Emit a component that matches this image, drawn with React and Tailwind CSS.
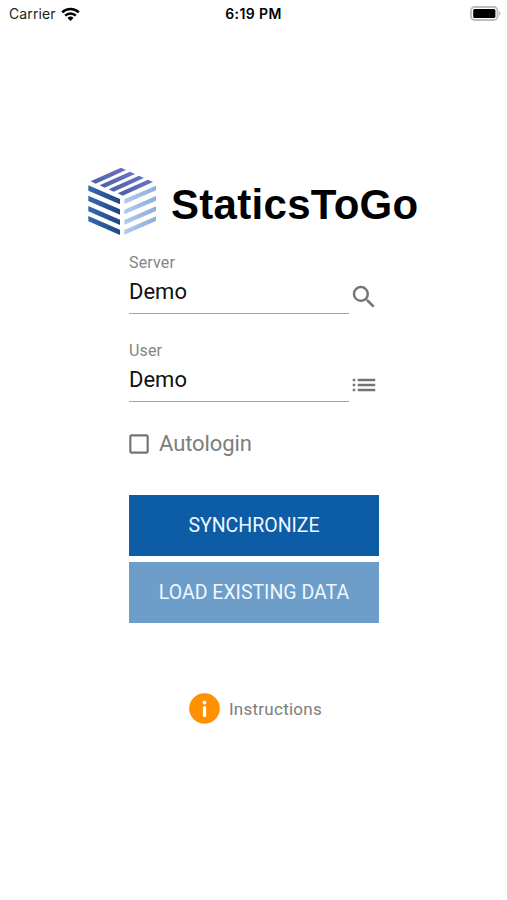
import { MdSearch, MdList, MdCheckBoxOutlineBlank } from 'react-icons/md';

const StatusBar = () => (
  <header className="grid h-7 grid-cols-3 items-center px-[9px] font-['Inter','Liberation_Sans',sans-serif] text-black">
    <div className="flex items-center gap-[5px]">
      <span className="text-[14px] leading-4 tracking-[0.1px] text-[#222]">Carrier</span>
      <svg className="-mt-px h-[14px] w-[19px]" viewBox="0 0 19 14" fill="none" stroke="#000" strokeWidth="2.5">
        <path d="M1.2 5.3a11.8 11.8 0 0 1 16.6 0" />
        <path d="M4.2 8.6a7.5 7.5 0 0 1 10.6 0" />
        <path d="M6.5 11a4.3 4.3 0 0 1 6 0L9.5 14z" fill="#000" stroke="none" />
      </svg>
    </div>
    <span className="whitespace-nowrap text-center text-[14px] font-semibold leading-4 tracking-[0.4px]">6:19 PM</span>
    <svg className="-mr-[3px] -mt-[2px] h-[15px] w-[31px] justify-self-end" viewBox="0 0 31 15">
      <rect x="1" y="1" width="26.5" height="13" rx="3.5" fill="#fff" stroke="#bdbdbd" strokeWidth="1.8" />
      <rect x="3.2" y="3" width="22.2" height="9" rx="1.5" fill="#000" />
      <path d="M29 5.3c2 .7 2 3.7 0 4.4z" fill="#bdbdbd" />
    </svg>
  </header>
);

const Logo = () => (
  <svg className="h-[82px] w-[85px] shrink-0" viewBox="0 0 255 246">
    <defs>
      <linearGradient id="top" x1="0" y1="0" x2="1" y2="0">
        <stop offset="0" stopColor="#4c62a6" />
        <stop offset="1" stopColor="#6b72c3" />
      </linearGradient>
      <linearGradient id="left" x1="0" y1="0" x2="1" y2="0">
        <stop offset="0" stopColor="#3568ad" />
        <stop offset="1" stopColor="#204783" />
      </linearGradient>
      <linearGradient id="right" x1="0" y1="0" x2="1" y2="0">
        <stop offset="0" stopColor="#b0caef" />
        <stop offset="1" stopColor="#8eafd8" />
      </linearGradient>
    </defs>
    <g fill="url(#top)">
      <path d="M32 64L123 23L138 30L47 71Z" />
      <path d="M59 76L150 35L165 42L74 83Z" />
      <path d="M86 88L177 47L192 54L101 95Z" />
      <path d="M113 100L204 59L219 66L128 107Z" />
    </g>
    {[0, 31, 62, 92].map((y) => (
      <g key={y} transform={`translate(0 ${y})`}>
        <path d="M25 76L120 117V133L25 92Z" fill="url(#left)" />
        <path d="M133 118L228 77V91L133 132Z" fill="url(#right)" />
      </g>
    ))}
  </svg>
);

const Field = ({ label, value, icon: Icon }) => (
  <div className="flex h-[88px] items-start">
    <div className="h-[62px] w-[220px] border-b border-[#a5a5a5]">
      <label className="block pt-px text-[16px] leading-[20px] tracking-[0.15px] text-[#858585]">{label}</label>
      <div className="mt-[5px] text-[22px] leading-[28px] text-[#111]">{value}</div>
    </div>
    <button type="button" className="mt-[30px]" aria-label={label}>
      <Icon className="size-[30px] text-[#747474]" />
    </button>
  </div>
);

const App = () => {
  return (
    <div className="h-[900px] w-[507px] overflow-hidden bg-white font-[Roboto,'Liberation_Sans',sans-serif]">
      <StatusBar />
      <div className="mt-[132px] flex h-[82px] items-center pl-20">
        <Logo />
        <h1 className="ml-[6px] mt-[8px] whitespace-nowrap font-['Liberation_Sans',sans-serif] text-[42px] font-bold leading-[48px] tracking-[0.3px] text-black">
          StaticsToGo
        </h1>
      </div>

      <main className="ml-[129px] mt-[10px] w-[250px]">
        <Field label="Server" value="Demo" icon={MdSearch} />
        <Field label="User" value="Demo" icon={MdList} />

        <label className="mt-[3px] flex h-[26px] items-center">
          <MdCheckBoxOutlineBlank className="-ml-[3px] size-[26px] text-[#747474]" />
          <span className="ml-[7px] text-[22px] leading-[26px] tracking-[-0.1px] text-[#7d7d7d]">Autologin</span>
        </label>

        <div className="mt-[38px] flex flex-col gap-[6px]">
          <button type="button" className="h-[61px] bg-[#0c5da5] pt-px text-[19.5px] text-[#f0f7ff]">SYNCHRONIZE</button>
          <button type="button" className="h-[61px] bg-[#6d9dc9] pt-px text-[19.5px] text-[#f0f7ff]">LOAD EXISTING DATA</button>
        </div>

        <div className="mt-[70px] flex items-center pl-[60px]">
          <svg className="size-[31px]" viewBox="0 0 31 31">
            <circle cx="15.5" cy="15.5" r="15.3" fill="#ff9100" />
            <circle cx="15.5" cy="9.5" r="1.9" fill="#fff" />
            <path d="M15.5 14.5v8" stroke="#fff" strokeWidth="3.2" strokeLinecap="round" />
          </svg>
          <span className="ml-[9px] text-[17px] leading-5 tracking-[0.25px] text-[#7d7d7d]">Instructions</span>
        </div>
      </main>
    </div>
  );
};

export default App;
